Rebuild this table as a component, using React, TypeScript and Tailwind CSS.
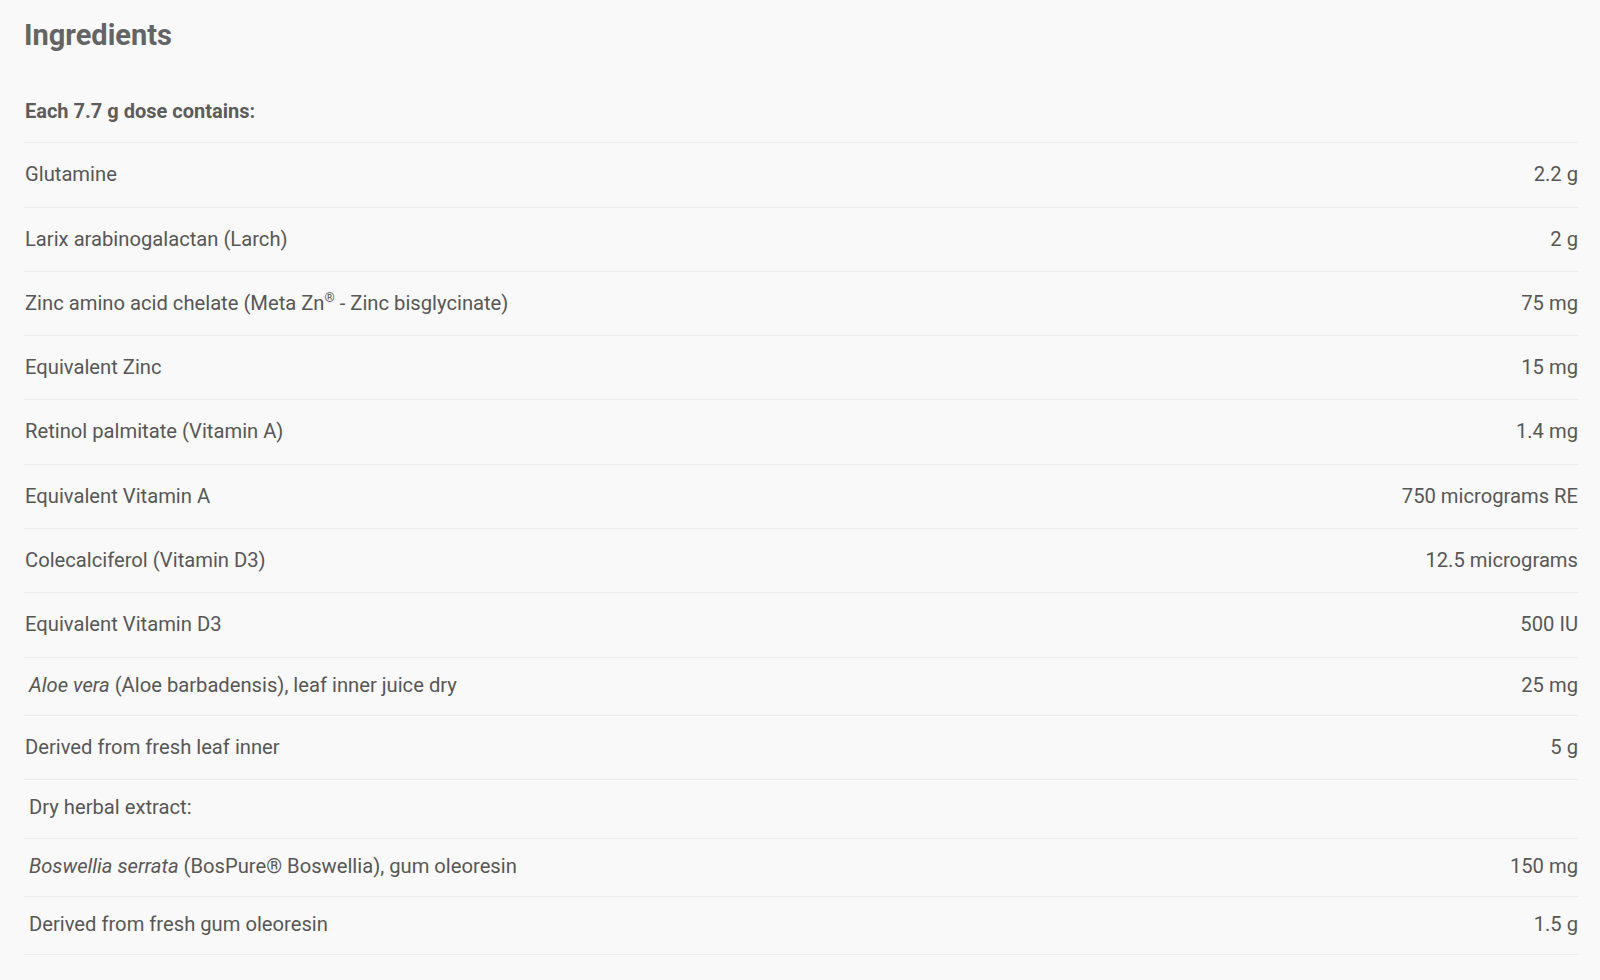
type Row = {
  name: React.ReactNode;
  amount?: string;
  sub?: boolean;
};

const rows: Row[] = [
  { name: "Glutamine", amount: "2.2 g" },
  { name: "Larix arabinogalactan (Larch)", amount: "2 g" },
  {
    name: (
      <>
        Zinc amino acid chelate (Meta Zn<sup className="text-[13px] top-[-8px]">®</sup> - Zinc bisglycinate)
      </>
    ),
    amount: "75 mg",
  },
  { name: "Equivalent Zinc", amount: "15 mg" },
  { name: "Retinol palmitate (Vitamin A)", amount: "1.4 mg" },
  { name: "Equivalent Vitamin A", amount: "750 micrograms RE" },
  { name: "Colecalciferol (Vitamin D3)", amount: "12.5 micrograms" },
  { name: "Equivalent Vitamin D3", amount: "500 IU" },
  {
    name: (
      <>
        <em>Aloe vera</em> (Aloe barbadensis), leaf inner juice dry
      </>
    ),
    amount: "25 mg",
    sub: true,
  },
  { name: "Derived from fresh leaf inner", amount: "5 g" },
  { name: "Dry herbal extract:", sub: true },
  {
    name: (
      <>
        <em>Boswellia serrata</em> (BosPure® Boswellia), gum oleoresin
      </>
    ),
    amount: "150 mg",
    sub: true,
  },
  { name: "Derived from fresh gum oleoresin", amount: "1.5 g", sub: true },
];

export default function App() {
  return (
    <div className="min-h-screen w-full bg-[#f9f9f9] font-['Roboto',sans-serif] text-[#575757]">
      <section className="pl-[24px] pr-[22px] pt-[17px]">
        {/* Title */}
        <h2 className="text-[29px] leading-[36px] font-bold text-[#646464]">Ingredients</h2>

        {/* Table */}
        <div className="mt-[25px] flex flex-col border-b border-[#ededed]">
          <div className="pt-[22px] pb-[19px] pl-px text-[20px] leading-[23.3px] font-bold text-[#5c5c5c]">
            Each 7.7 g dose contains:
          </div>
          {rows.map((row, i) => (
            <div
              key={i}
              className={
                row.sub
                  ? "flex items-start justify-between border-t border-[#ededed] pt-[16px] pb-[18px] pl-[5px] text-[20.2px] leading-[23.3px]"
                  : "flex items-start justify-between border-t border-[#ededed] py-[20px] pl-px text-[20.2px] leading-[23.3px]"
              }
            >
              <span>{row.name}</span>
              <span className="text-right">{row.amount}</span>
            </div>
          ))}
        </div>
      </section>
    </div>
  );
}
